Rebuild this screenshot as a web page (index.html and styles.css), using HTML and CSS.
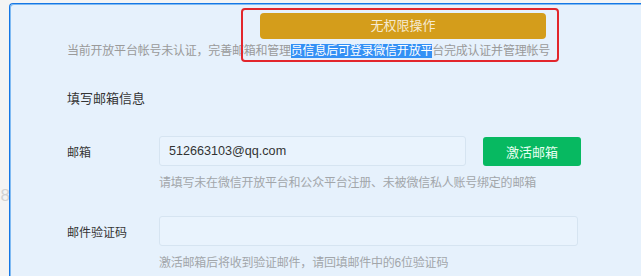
FILE: index.html
```html
<!DOCTYPE html>
<html lang="zh-CN">
<head>
  <meta charset="UTF-8" />
  <meta name="viewport" content="width=device-width, initial-scale=1.0"/>
  <title>完善邮箱信息</title>
  <link rel="stylesheet" href="styles.css">
</head>
<body>
  <div class="gutter"><span class="gutter-mark">8</span></div>

  <div class="panel">
    <p class="notice">当前开放平台帐号未认证，完善邮箱和管理<span class="selected">员信息后可登录微信开放平</span>台完成认证并管理帐号</p>

    <h2 class="section-title">填写邮箱信息</h2>

    <div class="form-row">
      <label class="form-label">邮箱</label>
      <input class="form-input" type="text" value="512663103@qq.com">
      <button class="btn-green">激活邮箱</button>
    </div>
    <p class="form-hint">请填写未在微信开放平台和公众平台注册、未被微信私人账号绑定的邮箱</p>

    <div class="form-row">
      <label class="form-label">邮件验证码</label>
      <input class="form-input wide" type="text">
    </div>
    <p class="form-hint">激活邮箱后将收到验证邮件，请回填邮件中的6位验证码</p>

    <!-- annotation drawn over the page -->
    <div class="alert-box">
      <div class="alert-btn">无权限操作</div>
    </div>
  </div>
</body>
</html>
```

FILE: styles.css
```css
* {
  box-sizing: border-box;
}

body {
  margin: 0;
  display: flex;
  height: 276px;
  overflow: hidden;
  background: #f4f4f4;
  font-family: "Liberation Sans", "Noto Sans CJK SC", sans-serif;
}

.gutter {
  width: 9px;
  flex-shrink: 0;
  overflow: hidden;
  padding-top: 186px;
  direction: rtl;
}

.gutter-mark {
  display: block;
  font-size: 17px;
  color: #d2d2d2;
  margin-right: -1px;
}

.panel {
  position: relative;
  flex: 1;
  margin-top: 3px;
  padding: 37px 0 0 57px;
  background: #e6f1fc;
  border-top: 1px solid #1677e5;
  border-left: 1px solid #1677e5;
  border-top-left-radius: 4px;
  box-shadow: inset 1px 1px 0 #7fbaf2;
}

.notice {
  margin: 0;
  font-size: 12px;
  line-height: 20px;
  letter-spacing: -0.22px;
  color: #9a9a9a;
  white-space: nowrap;
}

.selected {
  background: #3390f5;
  color: #fff;
}

.section-title {
  margin: 28px 0 27px;
  font-size: 13px;
  font-weight: normal;
  line-height: 20px;
  color: #353535;
}

.form-row {
  display: flex;
  align-items: center;
}

.form-label {
  width: 92px;
  font-size: 12px;
  color: #353535;
}

.form-input {
  width: 307px;
  height: 30px;
  padding: 0 9px;
  font-family: inherit;
  font-size: 12.6px;
  color: #333;
  background: #e9f3fd;
  border: 1px solid #d6e4f1;
  border-radius: 3px;
  outline: none;
}

.form-input.wide {
  width: 419px;
}

.btn-green {
  width: 98px;
  height: 29px;
  margin-left: 17px;
  font-family: inherit;
  font-size: 13px;
  color: #e8fff2;
  background: #07b961;
  border: none;
  border-radius: 3px;
}

.form-hint {
  margin: 8px 0 24px 92px;
  font-size: 12px;
  line-height: 18px;
  letter-spacing: -0.22px;
  color: #a2a6aa;
}

.alert-box {
  position: absolute;
  left: 231px;
  top: 4px;
  width: 318px;
  height: 54px;
  padding: 3px 0 0 17px;
  border: 2px solid #e2262c;
  border-radius: 4px;
}

.alert-btn {
  width: 286px;
  height: 26px;
  line-height: 26px;
  text-align: center;
  font-size: 13px;
  color: #f6ead0;
  background: #d49d1b;
  border-radius: 4px;
}
```
